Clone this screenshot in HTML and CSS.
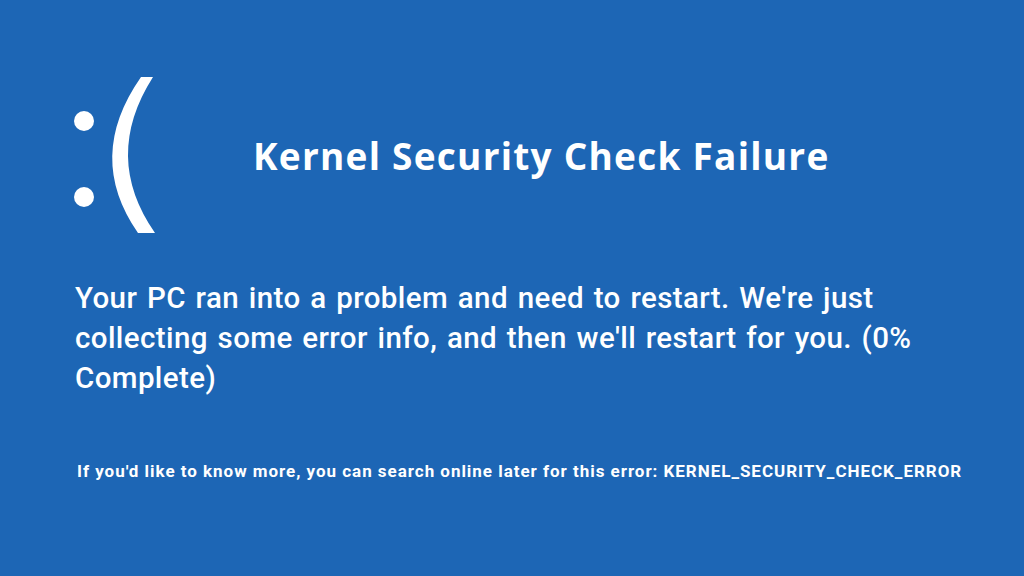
FILE: index.html
```html
<!DOCTYPE html>
<html>
    <head>
        <title>Kernel Security Check Failure</title>
        <link rel="stylesheet" href="styles.css">
    </head>
    <body>
        <main class="screen">
            <header class="top">
                <svg class="face" width="95" height="170" viewBox="0 0 95 170">
                    <circle cx="14" cy="51" r="10" fill="#fff"/>
                    <circle cx="14" cy="127" r="10" fill="#fff"/>
                    <path d="M71,7 Q15,87 68,163 L85,163 Q32,87 83,7 Z" fill="#fff"/>
                </svg>
                <h1 class="title">Kernel Security Check Failure</h1>
            </header>
            <p class="message">
                Your PC ran into a problem and need to restart. We're just
                collecting some error info, and then we'll restart for you. (0%
                Complete)
            </p>
            <p class="more">
                If you'd like to know more, you can search online later for this error: KERNEL_SECURITY_CHECK_ERROR
            </p>
        </main>
    </body>
</html>
```

FILE: styles.css
```css
html, body {
    margin: 0;
    height: 100%;
}
body {
    background: #1d66b5;
    color: #fff;
    overflow: hidden;
}
.screen {
    padding: 70px 0 0 70px;
}
.top {
    display: flex;
    align-items: center;
}
.face {
    display: block;
    flex-shrink: 0;
}
.title {
    margin: 0 0 0 88px;
    font-family: "Open Sans", sans-serif;
    font-weight: 700;
    font-size: 37px;
    letter-spacing: 1.25px;
    line-height: 1;
}
.message {
    margin: 38px 0 0 5px;
    width: 900px;
    font-family: "Roboto", sans-serif;
    font-weight: 500;
    font-size: 29.5px;
    letter-spacing: 0.4px;
    word-spacing: 2px;
    line-height: 40px;
}
.more {
    margin: 63px 0 0 7px;
    font-family: "Roboto", sans-serif;
    font-weight: 700;
    font-size: 17px;
    letter-spacing: 0.97px;
    white-space: nowrap;
}
```
